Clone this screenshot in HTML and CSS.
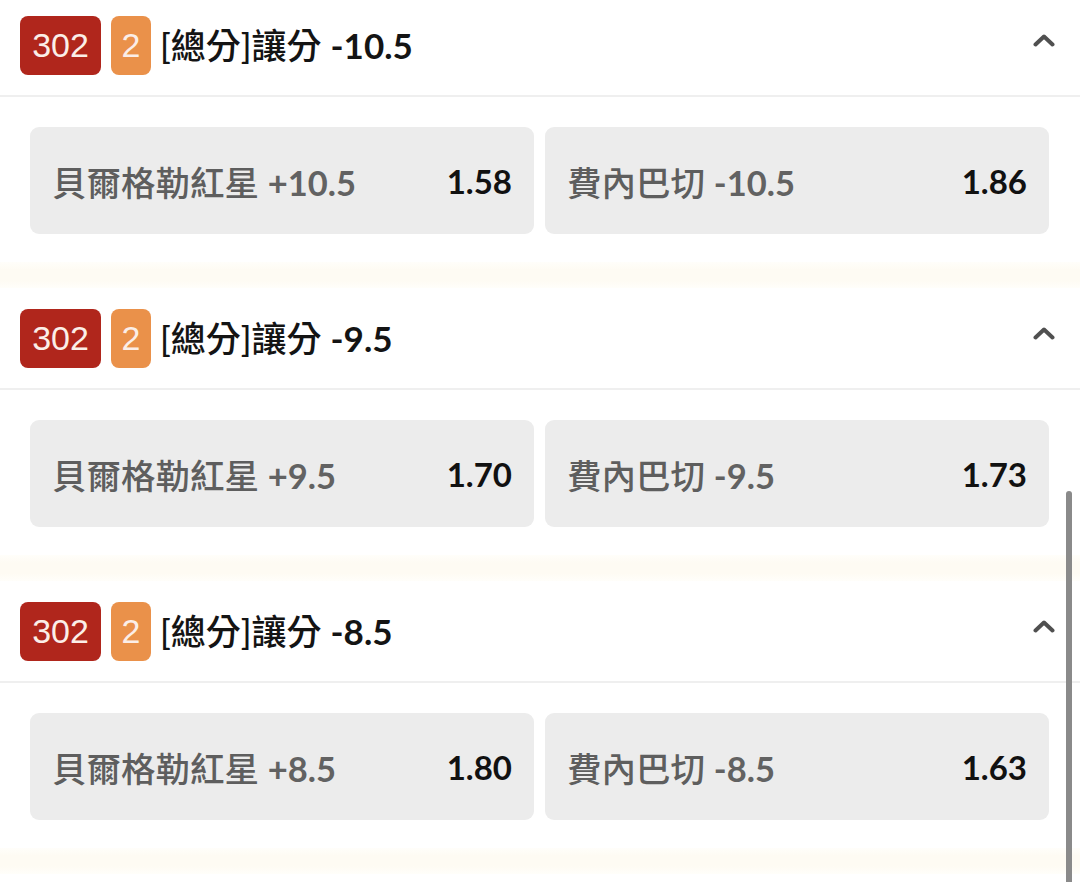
FILE: index.html
```html
<!DOCTYPE html>
<html lang="zh-Hant">
<head>
<meta charset="utf-8">
<title>讓分</title>
<link rel="stylesheet" href="styles.css">
</head>
<body>
<div class="list">
  <section class="market">
    <div class="market-head">
      <span class="badge badge-id">302</span>
      <span class="badge badge-num">2</span>
      <span class="title"><span class="title-name">[總分]讓分</span> <span class="title-line">-10.5</span></span>
      <svg class="chev" viewBox="0 0 22 14" width="22" height="14"><path d="M2.5 11.5 L11 3.5 L19.5 11.5" fill="none" stroke="#505050" stroke-width="4" stroke-linecap="round" stroke-linejoin="round"/></svg>
    </div>
    <div class="market-body">
      <div class="odd"><span class="label"><span class="team">貝爾格勒紅星</span> <span class="hcp">+10.5</span></span><span class="price">1.58</span></div>
      <div class="odd"><span class="label"><span class="team">費內巴切</span> <span class="hcp">-10.5</span></span><span class="price">1.86</span></div>
    </div>
    <div class="gap"></div>
  </section>
  <section class="market">
    <div class="market-head">
      <span class="badge badge-id">302</span>
      <span class="badge badge-num">2</span>
      <span class="title"><span class="title-name">[總分]讓分</span> <span class="title-line">-9.5</span></span>
      <svg class="chev" viewBox="0 0 22 14" width="22" height="14"><path d="M2.5 11.5 L11 3.5 L19.5 11.5" fill="none" stroke="#505050" stroke-width="4" stroke-linecap="round" stroke-linejoin="round"/></svg>
    </div>
    <div class="market-body">
      <div class="odd"><span class="label"><span class="team">貝爾格勒紅星</span> <span class="hcp">+9.5</span></span><span class="price">1.70</span></div>
      <div class="odd"><span class="label"><span class="team">費內巴切</span> <span class="hcp">-9.5</span></span><span class="price">1.73</span></div>
    </div>
    <div class="gap"></div>
  </section>
  <section class="market">
    <div class="market-head">
      <span class="badge badge-id">302</span>
      <span class="badge badge-num">2</span>
      <span class="title"><span class="title-name">[總分]讓分</span> <span class="title-line">-8.5</span></span>
      <svg class="chev" viewBox="0 0 22 14" width="22" height="14"><path d="M2.5 11.5 L11 3.5 L19.5 11.5" fill="none" stroke="#505050" stroke-width="4" stroke-linecap="round" stroke-linejoin="round"/></svg>
    </div>
    <div class="market-body">
      <div class="odd"><span class="label"><span class="team">貝爾格勒紅星</span> <span class="hcp">+8.5</span></span><span class="price">1.80</span></div>
      <div class="odd"><span class="label"><span class="team">費內巴切</span> <span class="hcp">-8.5</span></span><span class="price">1.63</span></div>
    </div>
    <div class="gap"></div>
  </section>
</div>
<div class="scrollbar"></div>
</body>
</html>
```
FILE: styles.css
```css
html, body {
  margin: 0;
  padding: 0;
  background: #ffffff;
  height: 882px;
  overflow: hidden;
}
body {
  position: relative;
  font-family: Lato, "Noto Sans CJK TC", sans-serif;
}
.list {
  margin-top: -5px;
}
.market-head {
  height: 100px;
  display: flex;
  align-items: center;
  padding: 0 25px 0 20px;
  border-bottom: 2px solid #efefef;
}
.badge {
  height: 59px;
  border-radius: 8px;
  display: flex;
  align-items: center;
  justify-content: center;
  color: #fbeee8;
  font-family: "Liberation Sans", "Noto Sans CJK TC", sans-serif;
  font-size: 34px;
}
.badge-id {
  width: 81px;
  background: #b0261c;
}
.badge-num {
  width: 40px;
  margin-left: 10px;
  background: #ea914a;
}
.title {
  margin-left: 9px;
  font-size: 35px;
  color: #141414;
  flex: 1;
  line-height: 1;
}
.title-name {
  font-weight: 500;
}
.title-line {
  font-weight: 700;
}
.chev {
  display: block;
  margin-bottom: 10px;
}
.market-body {
  display: grid;
  grid-template-columns: 1fr 1fr;
  gap: 11px;
  padding: 30px 31px 28px 30px;
}
.odd {
  height: 107px;
  background: #ececec;
  border-radius: 9px;
  display: flex;
  align-items: center;
  justify-content: space-between;
  padding: 0 22px 0 22px;
}
.label {
  font-size: 34.5px;
  color: #5e5e5e;
}
.team {
  font-weight: 500;
}
.hcp {
  font-weight: 700;
  color: #626262;
}
.price {
  font-size: 33px;
  font-weight: 700;
  color: #111111;
}
.gap {
  height: 26px;
  background: linear-gradient(to bottom, #fffefa 0%, #fefbf3 30%, #fefbf3 70%, #fffefa 100%);
}
.scrollbar {
  position: absolute;
  left: 1066px;
  top: 491px;
  width: 6px;
  height: 400px;
  border-radius: 3px;
  background: #8a8a8a;
}
```
